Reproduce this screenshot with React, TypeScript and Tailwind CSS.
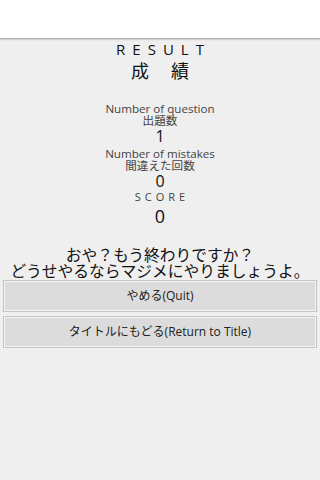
import React from "react";

const font = { fontFamily: '"Open Sans", "Noto Sans CJK JP", sans-serif' };

function Stat({ en, ja, value }: { en: string; ja: string; value: string }) {
  return (
    <div className="flex flex-col items-center">
      <p className="text-[11.6px] leading-[12px] text-[#444]">{en}</p>
      <p className="text-[11.6px] leading-[12px] text-[#444]">{ja}</p>
      <p className="text-[16px] leading-[18px] text-[#111]">{value}</p>
    </div>
  );
}

function OldButton({ label }: { label: string }) {
  return (
    <button className="flex h-[32px] w-full items-center justify-center border border-[#c4c4c4] bg-[#dcdcdc] text-[12px] text-[#222] shadow-[inset_1px_1px_0_#f4f4f4,inset_-1px_-1px_0_#f4f4f4]">
      {label}
    </button>
  );
}

export default function App() {
  return (
    <div className="flex h-[480px] w-[320px] flex-col bg-[#efefef]" style={font}>
      <div className="h-[39px] border-b border-[#b4b4b4] bg-white shadow-[0_1px_1px_#d0d0d0]" />

      <div className="flex flex-col items-center pt-[1px]">
        <h1 className="pl-[7px] text-[15px] leading-[18px] tracking-[7px] text-[#111]">RESULT</h1>
        <h2 className="mt-[2px] pl-[2px] text-[18px] leading-[22px] tracking-[2px] text-[#111]">成　績</h2>
      </div>

      <div className="mt-[21px] flex flex-col items-center gap-[3px]">
        <Stat en="Number of question" ja="出題数" value="1" />
        <Stat en="Number of mistakes" ja="間違えた回数" value="0" />
      </div>
      <div className="flex flex-col items-center">
        <p className="pl-[4px] text-[11px] leading-[14px] tracking-[4px] text-[#444]">SCORE</p>
        <p className="mt-[1px] text-[18px] leading-[22px] text-[#111]">0</p>
      </div>

      <div className="mt-[20px] flex flex-col items-center text-[15.75px] leading-[16px] text-[#111]">
        <p>おや？もう終わりですか？</p>
        <p>どうせやるならマジメにやりましょうよ。</p>
      </div>

      <div className="mt-[1px] flex flex-col gap-[4px] px-[3px]">
        <OldButton label="やめる(Quit)" />
        <OldButton label="タイトルにもどる(Return to Title)" />
      </div>
    </div>
  );
}
